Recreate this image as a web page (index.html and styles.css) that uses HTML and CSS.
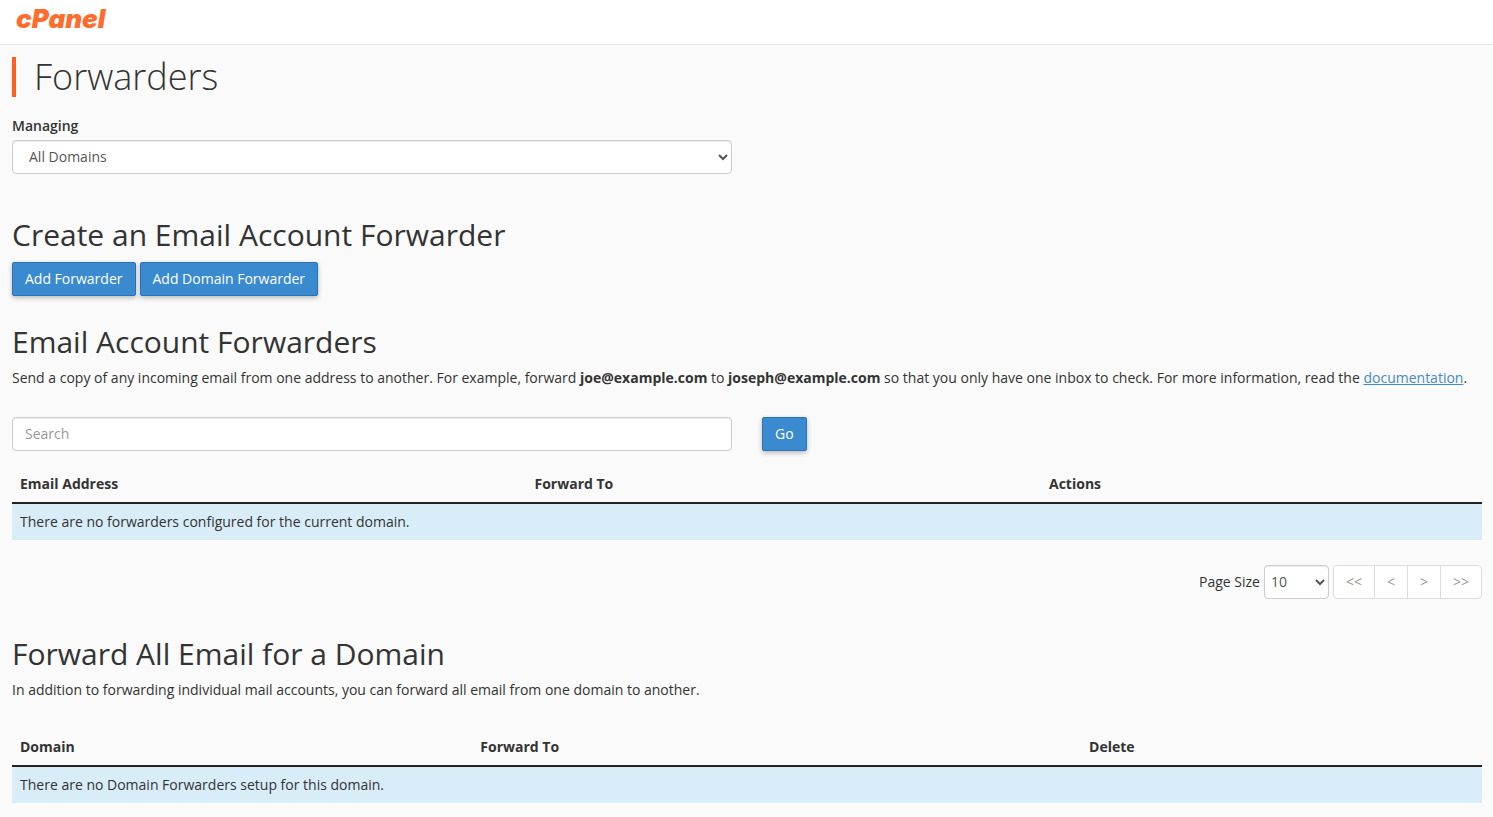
FILE: index.html
```html
<!DOCTYPE html>
<html lang="en">
<head>
    <meta charset="UTF-8">
    <meta name="viewport" content="width=device-width, initial-scale=1.0">
    <title>cPanel - Forwarders</title>
    <link rel="stylesheet" href="styles.css">
</head>
<body>
    <header class="topbar">
        <a class="logo" href="#">cPanel</a>
    </header>

    <main class="content">
        <h1 class="page-title">Forwarders</h1>

        <section class="managing">
            <label for="domain">Managing</label>
            <div class="row">
                <select id="domain" class="form-control">
                    <option>All Domains</option>
                </select>
            </div>
        </section>

        <section class="section">
            <h2>Create an Email Account Forwarder</h2>
            <div class="buttons">
                <button type="button" class="btn">Add Forwarder</button>
                <button type="button" class="btn">Add Domain Forwarder</button>
            </div>
        </section>

        <section class="section">
            <h2>Email Account Forwarders</h2>
            <p>Send a copy of any incoming email from one address to another. For example, forward <strong>joe@example.com</strong> to <strong>joseph@example.com</strong> so that you only have one inbox to check. For more information, read the <a href="#">documentation</a>.</p>

            <form class="row search">
                <input type="text" class="form-control" placeholder="Search" aria-label="Search">
                <div>
                    <button type="button" class="btn">Go</button>
                </div>
            </form>

            <table class="table accounts">
                <thead>
                    <tr>
                        <th>Email Address</th>
                        <th>Forward To</th>
                        <th>Actions</th>
                    </tr>
                </thead>
                <tbody>
                    <tr>
                        <td colspan="3">There are no forwarders configured for the current domain.</td>
                    </tr>
                </tbody>
            </table>

            <div class="paging">
                <label for="page-size">Page Size</label>
                <select id="page-size" class="form-control page-size">
                    <option>10</option>
                </select>
                <nav class="pagination">
                    <button type="button">&lt;&lt;</button>
                    <button type="button">&lt;</button>
                    <button type="button">&gt;</button>
                    <button type="button">&gt;&gt;</button>
                </nav>
            </div>
        </section>

        <section class="section">
            <h2>Forward All Email for a Domain</h2>
            <p>In addition to forwarding individual mail accounts, you can forward all email from one domain to another.</p>

            <table class="table domains">
                <thead>
                    <tr>
                        <th>Domain</th>
                        <th>Forward To</th>
                        <th>Delete</th>
                    </tr>
                </thead>
                <tbody>
                    <tr>
                        <td colspan="3">There are no Domain Forwarders setup for this domain.</td>
                    </tr>
                </tbody>
            </table>
        </section>
    </main>
</body>
</html>
```
FILE: styles.css
```css
* {
    box-sizing: border-box;
}

body {
    margin: 0;
    background-color: #fafafa;
    color: #333;
    font-family: "Open Sans", sans-serif;
    font-size: 14px;
    line-height: 20px;
}

h1,
h2,
p {
    margin: 0;
}

a {
    color: #428bca;
}

input,
select,
button {
    font-family: inherit;
    font-size: 14px;
    line-height: 20px;
}

.topbar {
    display: flex;
    align-items: center;
    height: 45px;
    padding: 0 16px 6px;
    background-color: #fff;
    border-bottom: 1px solid #e5e8f0;
}

.logo {
    color: #ff6c2c;
    font-family: Inter, sans-serif;
    font-size: 26px;
    font-style: italic;
    font-weight: 900;
    line-height: 32px;
    text-decoration: none;
}

.content {
    padding: 12px 11px 14px 12px;
}

.page-title {
    padding-left: 18px;
    border-left: 4px solid #ff6020;
    font-size: 36px;
    font-weight: 300;
    line-height: 40px;
}

h2 {
    margin-bottom: 10px;
    font-size: 30px;
    font-weight: 400;
    line-height: 33px;
}

.managing {
    margin: 19px 0 44px;
}

.managing label {
    display: block;
    margin-bottom: 4px;
    font-weight: 600;
}

.section {
    margin-bottom: 29px;
}

.section:last-child {
    margin-bottom: 0;
}

.row {
    display: grid;
    grid-template-columns: 1fr 1fr;
    gap: 30px;
}

.form-control {
    width: 100%;
    height: 34px;
    padding: 5px 12px 7px;
    background-color: #fff;
    border: 1px solid #ccc;
    border-radius: 4px;
    box-shadow: inset 0 1px 1px rgba(0, 0, 0, .075);
    color: #555;
}

.form-control::placeholder {
    color: #999;
}

.buttons {
    display: flex;
    gap: 4px;
    margin-top: 11px;
}

.btn {
    height: 34px;
    padding: 6px 12px;
    background-color: #3a8ad0;
    border: 1px solid #2a72b5;
    border-radius: 2px;
    box-shadow: 0 2px 5px rgba(0, 0, 0, .26);
    color: #fff;
    cursor: pointer;
}

.search {
    margin: 29px 0 15px;
}

.table {
    width: 100%;
    border-collapse: collapse;
    table-layout: fixed;
}

.table th,
.table td {
    padding: 8px;
    text-align: left;
}

.table th {
    border-bottom: 2px solid #222;
    font-weight: 700;
}

.table td {
    background-color: #d9edf9;
}

.accounts th {
    width: 35%;
}

.accounts th:last-child {
    width: 30%;
}

.domains {
    margin-top: 29px;
}

.domains th:nth-child(1) {
    width: 31%;
}

.domains th:nth-child(2) {
    width: 41%;
}

.domains th:nth-child(3) {
    width: 27%;
}

.paging {
    display: flex;
    align-items: center;
    justify-content: flex-end;
    gap: 4px;
    margin-top: 25px;
    padding-bottom: 9px;
}

.page-size {
    width: 65px;
    padding-right: 2px;
    padding-left: 2px;
}

.pagination {
    display: flex;
}

.pagination button {
    height: 34px;
    margin-left: -1px;
    padding: 6px 12px;
    background-color: #fff;
    border: 1px solid #ddd;
    color: #999;
}

.pagination button:first-child {
    margin-left: 0;
    border-radius: 4px 0 0 4px;
}

.pagination button:last-child {
    border-radius: 0 4px 4px 0;
}
```
